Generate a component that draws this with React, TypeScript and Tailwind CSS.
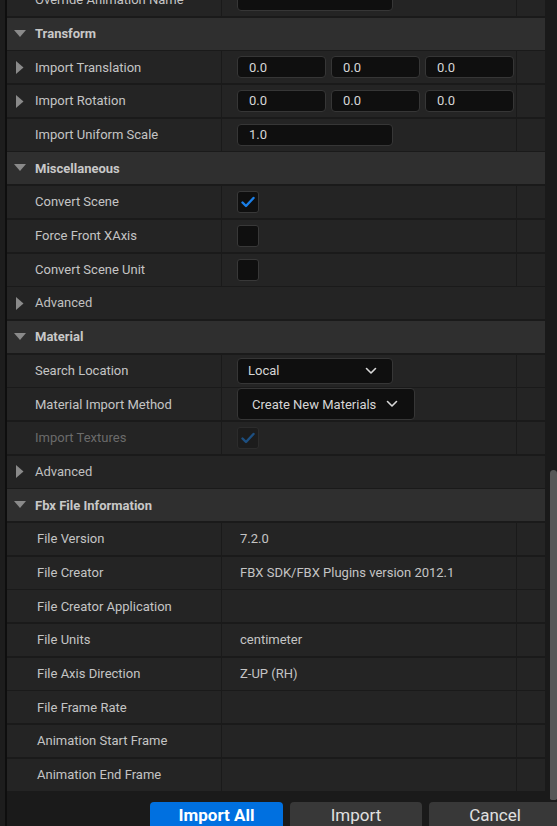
import React from "react";

type Row =
  | { kind: "header"; label: string }
  | { kind: "group"; label: string }
  | { kind: "prop"; label: string; value?: React.ReactNode; arrow?: boolean; disabled?: boolean; indent?: number };

const Vec = ({ v }: { v: string[] }) => (
  <div className="flex gap-[5px]">
    {v.map((x, i) => (
      <div key={i} className="w-[89px] h-[22px] rounded-[4px] bg-[#0f0f0f] border border-[#363636] flex items-center pl-[11px] text-[#d6d6d6]">
        {x}
      </div>
    ))}
  </div>
);

const Field = ({ v }: { v: string }) => (
  <div className="w-[156px] h-[22px] rounded-[4px] bg-[#0f0f0f] border border-[#363636] flex items-center pl-[11px] text-[#d6d6d6]">
    {v}
  </div>
);

const Check = ({ on, disabled }: { on?: boolean; disabled?: boolean }) => (
  <div
    className={
      "w-[22px] h-[22px] rounded-[3px] border flex items-center justify-center " +
      (disabled ? "bg-[#1c1c1c] border-[#2c2c2c]" : "bg-[#0f0f0f] border-[#383838]")
    }
  >
    {on && (
      <svg width="14" height="12" viewBox="0 0 14 12">
        <path d="M1.5 6.5 L5 10 L12.5 2" fill="none" stroke={disabled ? "#1d4f80" : "#1a7fe8"} strokeWidth="2.4" strokeLinecap="round" strokeLinejoin="round" />
      </svg>
    )}
  </div>
);

const Chevron = () => (
  <svg width="12" height="8" viewBox="0 0 12 8">
    <path d="M1.5 1.5 L6 6 L10.5 1.5" fill="none" stroke="#d8d8d8" strokeWidth="1.6" strokeLinecap="round" strokeLinejoin="round" />
  </svg>
);

const Combo = ({ v, w, h, pl, gap }: { v: string; w: string; h: string; pl: string; gap?: boolean }) => (
  <div className={`${w} ${h} ${pl} rounded-[4px] bg-[#0f0f0f] border border-[#363636] flex items-center text-[#d6d6d6]`}>
    <span className={gap ? "mr-[10px]" : "flex-1"}>{v}</span>
    <span className={gap ? "" : "mr-[15px]"}>
      <Chevron />
    </span>
  </div>
);

const Down = () => (
  <svg width="12" height="8" viewBox="0 0 12 8" className="ml-[7px] mr-[9px] shrink-0">
    <path d="M0 0 H12 L6 7 Z" fill="#8a8a8a" />
  </svg>
);

const Right = () => (
  <svg width="8" height="13" viewBox="0 0 8 13" className="ml-[9px] mr-[11px] shrink-0">
    <path d="M0 0 L7.5 6.5 L0 13 Z" fill="#8a8a8a" />
  </svg>
);

const rows: Row[] = [
  { kind: "prop", label: "Override Animation Name", value: <Field v="" /> },
  { kind: "header", label: "Transform" },
  { kind: "prop", label: "Import Translation", arrow: true, value: <Vec v={["0.0", "0.0", "0.0"]} /> },
  { kind: "prop", label: "Import Rotation", arrow: true, value: <Vec v={["0.0", "0.0", "0.0"]} /> },
  { kind: "prop", label: "Import Uniform Scale", value: <Field v="1.0" /> },
  { kind: "header", label: "Miscellaneous" },
  { kind: "prop", label: "Convert Scene", value: <Check on /> },
  { kind: "prop", label: "Force Front XAxis", value: <Check /> },
  { kind: "prop", label: "Convert Scene Unit", value: <Check /> },
  { kind: "group", label: "Advanced" },
  { kind: "header", label: "Material" },
  { kind: "prop", label: "Search Location", value: <Combo v="Local" w="w-[156px]" h="h-[26px]" pl="pl-[10px]" /> },
  { kind: "prop", label: "Material Import Method", value: <Combo v="Create New Materials" w="w-[178px]" h="h-[32px]" pl="pl-[14px]" gap /> },
  { kind: "prop", label: "Import Textures", disabled: true, value: <Check on disabled /> },
  { kind: "group", label: "Advanced" },
  { kind: "header", label: "Fbx File Information" },
  { kind: "prop", label: "File Version", indent: 2, value: <span className="ml-[3px]">7.2.0</span> },
  { kind: "prop", label: "File Creator", indent: 2, value: <span className="ml-[3px]">FBX SDK/FBX Plugins version 2012.1</span> },
  { kind: "prop", label: "File Creator Application", indent: 2 },
  { kind: "prop", label: "File Units", indent: 2, value: <span className="ml-[3px]">centimeter</span> },
  { kind: "prop", label: "File Axis Direction", indent: 2, value: <span className="ml-[3px]">Z-UP (RH)</span> },
  { kind: "prop", label: "File Frame Rate", indent: 2 },
  { kind: "prop", label: "Animation Start Frame", indent: 2 },
  { kind: "prop", label: "Animation End Frame", indent: 2 },
];

function RowView({ r }: { r: Row }) {
  if (r.kind === "header") {
    return (
      <div className="h-[32px] shrink-0 bg-[#2f2f2f] flex items-center text-[#c8c8c8] font-bold">
        <Down />
        {r.label}
      </div>
    );
  }
  if (r.kind === "group") {
    return (
      <div className="h-[32px] shrink-0 bg-[#242424] flex items-center text-[#c0c0c0]">
        <Right />
        {r.label}
      </div>
    );
  }
  return (
    <div className="h-[32px] shrink-0 flex gap-px bg-[#1a1a1a]">
      <div className={"w-[214px] shrink-0 bg-[#242424] flex items-center " + (r.disabled ? "text-[#6b6b6b]" : "text-[#c4c4c4]")}>
        {r.arrow ? <Right /> : <span className={"shrink-0 " + (r.indent ? "w-[30px]" : "w-[28px]")} />}
        {r.label}
      </div>
      <div className="w-[294px] shrink-0 bg-[#242424] flex items-center pl-[15px] text-[#c4c4c4]">{r.value}</div>
      <div className="flex-1 bg-[#242424]" />
    </div>
  );
}

const btn = "h-[30px] shrink-0 rounded-[4px] flex items-start justify-center pt-[3px] text-[17px] leading-[20px]";

export default function App() {
  return (
    <div className="w-[557px] h-[826px] bg-[#1a1a1a] flex overflow-hidden text-[13px] font-['Roboto','Noto_Sans',sans-serif]">
      <div className="w-[5px] shrink-0 bg-[#1d1d1d]" />
      <div className="w-[2px] shrink-0 bg-[#0e0e0e]" />
      <div className="w-[550px] shrink-0 flex flex-col">
        <div className="flex h-[802px] shrink-0">
          <div className="w-[538px] shrink-0 h-[793px] overflow-hidden">
            <div className="flex flex-col gap-[1.7px] mt-[-16px]">
              {rows.map((r, i) => (
                <RowView key={i} r={r} />
              ))}
            </div>
          </div>
          <div className="flex-1 pl-[5px] pt-[470px] pb-[2px]">
            <div className="h-full bg-[#575757] rounded-t-[6px] rounded-b-[3px]" />
          </div>
        </div>
        <div className="h-[30px] shrink-0 flex gap-[7px] pl-[143px]">
          <div className={btn + " w-[133px] bg-[#0070e0] text-white font-bold"}>Import All</div>
          <div className={btn + " w-[132px] bg-[#383838] text-[#e0e0e0]"}>Import</div>
          <div className={btn + " w-[132px] bg-[#383838] text-[#e0e0e0]"}>Cancel</div>
        </div>
      </div>
    </div>
  );
}
